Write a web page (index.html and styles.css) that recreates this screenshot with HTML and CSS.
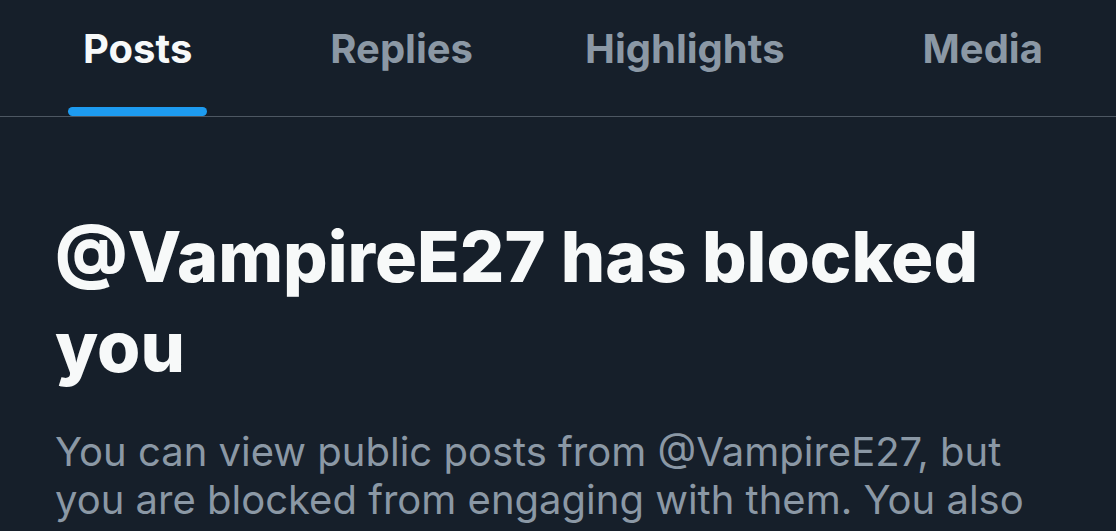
FILE: index.html
```html
<!DOCTYPE html>
<html>
<head>
<meta charset="utf-8">
<link rel="stylesheet" href="styles.css">
</head>
<body>
<nav class="tabs">
  <a class="tab tab-posts active">Posts<span class="bar"></span></a>
  <a class="tab tab-replies">Replies</a>
  <a class="tab tab-highlights">Highlights</a>
  <a class="tab tab-media">Media</a>
</nav>
<main class="blocked">
  <h1 class="title">@VampireE27 has blocked you</h1>
  <p class="desc">You can view public posts from @VampireE27, but you are blocked from engaging with them. You also</p>
</main>
</body>
</html>
```
FILE: styles.css
```css
html, body {
  margin: 0;
  padding: 0;
  background: #161f2a;
  height: 100%;
  overflow: hidden;
}
body {
  font-family: Inter, "Noto Sans", sans-serif;
  color: #f7f9f9;
}
.tabs {
  display: flex;
  height: 116px;
  padding: 0 0 0 68px;
  border-bottom: 1px solid #4d5762;
}
.tab {
  position: relative;
  padding: 25px 15px 0;
  font-size: 40px;
  font-weight: 700;
  color: #8b98a5;
  line-height: 48px;
  white-space: nowrap;
}
.tab-replies { margin-left: 108px; }
.tab-highlights { margin-left: 82px; }
.tab-media { margin-left: 108px; }
.tab.active {
  color: #f7f9f9;
}
.bar {
  position: absolute;
  left: 0;
  right: 0;
  bottom: 0;
  height: 9px;
  border-radius: 5px;
  background: #1d9bf0;
}
.blocked {
  padding: 0 40px 0 55px;
}
.title {
  margin: 95px 0 0;
  max-width: 960px;
  font-size: 70px;
  font-weight: 800;
  line-height: 90px;
  letter-spacing: 0;
}
.desc {
  margin: 36px 0 0;
  font-size: 40px;
  line-height: 48px;
  color: #8b98a5;
  font-weight: 400;
}
```
